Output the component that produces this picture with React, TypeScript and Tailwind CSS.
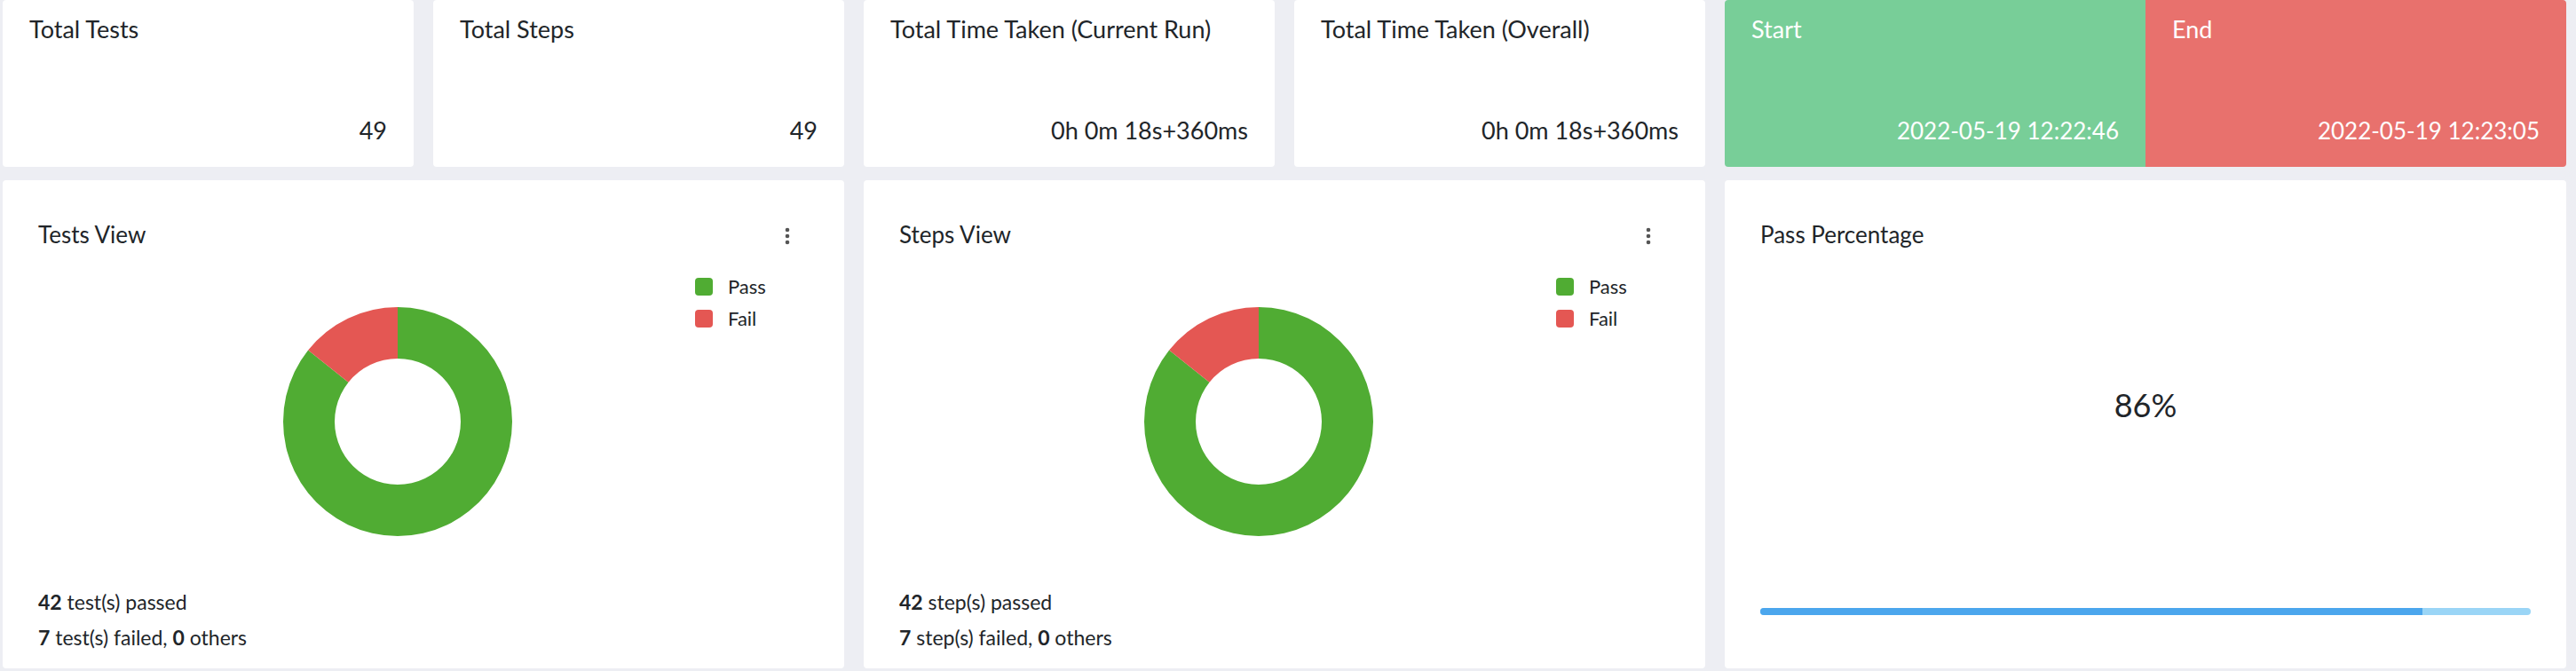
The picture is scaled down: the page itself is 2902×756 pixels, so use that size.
import React from "react";

const PASS = 42;
const FAIL = 7;

const StatCard = ({ title, value }: { title: string; value: string }) => (
	<div className="flex h-[188px] flex-col justify-between rounded-[4px] bg-white px-[30px] pt-[17px] pb-[25px]">
		<p className="text-[27px] leading-[32px]">{title}</p>
		<p className="text-right text-[27px] leading-[32px]">{value}</p>
	</div>
);

const TimeHalf = ({ label, value, className }: { label: string; value: string; className: string }) => (
	<div className={`flex flex-1 flex-col justify-between px-[30px] pt-[17px] pb-[25px] text-white ${className}`}>
		<p className="text-[27px] leading-[32px]">{label}</p>
		<p className="text-right text-[26px] leading-[32px]">{value}</p>
	</div>
);

const Kebab = () => (
	<button className="flex h-[32px] w-[48px] items-center justify-center pt-[4px]">
		<svg width="6" height="20" viewBox="0 0 6 20" fill="#555">
			<circle cx="3" cy="3" r="2.3" />
			<circle cx="3" cy="10" r="2.3" />
			<circle cx="3" cy="17" r="2.3" />
		</svg>
	</button>
);

const Donut = ({ pass, fail }: { pass: number; fail: number }) => {
	const R = 129;
	const r = 71;
	const c = 129;
	const a = ((-90 - (fail / (pass + fail)) * 360) * Math.PI) / 180;
	const ox = c + R * Math.cos(a);
	const oy = c + R * Math.sin(a);
	const ix = c + r * Math.cos(a);
	const iy = c + r * Math.sin(a);
	const green = `M ${c} ${c - R} A ${R} ${R} 0 1 1 ${ox} ${oy} L ${ix} ${iy} A ${r} ${r} 0 1 0 ${c} ${c - r} Z`;
	const red = `M ${c} ${c - R} A ${R} ${R} 0 0 0 ${ox} ${oy} L ${ix} ${iy} A ${r} ${r} 0 0 1 ${c} ${c - r} Z`;
	return (
		<svg width="258" height="258" viewBox="0 0 258 258">
			<path d={green} fill="#50ac33" />
			<path d={red} fill="#e45753" />
		</svg>
	);
};

const LegendItem = ({ label, color }: { label: string; color: string }) => (
	<div className="flex h-[20px] items-center gap-[17px]">
		<span className={`h-[20px] w-[20px] rounded-[4px] ${color}`} />
		<span className="text-[22px] leading-[20px]">{label}</span>
	</div>
);

const ChartCard = ({ title, noun }: { title: string; noun: string }) => (
	<div className="col-span-2 flex h-[550px] flex-col rounded-[4px] bg-white px-[40px] pt-[45px]">
		<div className="flex h-[32px] items-center justify-between">
			<p className="text-[26px] leading-[32px]">{title}</p>
			<Kebab />
		</div>

		<div className="mt-[33px] flex h-[324px]">
			<div className="flex w-[740px] items-center justify-center pl-[70px]">
				<Donut pass={PASS} fail={FAIL} />
			</div>
			<div className="flex flex-col gap-[16px]">
				<LegendItem label="Pass" color="bg-[#50ac33]" />
				<LegendItem label="Fail" color="bg-[#e45753]" />
			</div>
		</div>

		<div className="mt-[21px] text-[23px] leading-[40px]">
			<p>
				<b>{PASS}</b> {noun}(s) passed
			</p>
			<p>
				<b>{FAIL}</b> {noun}(s) failed, <b>0</b> others
			</p>
		</div>
	</div>
);

const PercentCard = () => {
	const pct = Math.round((PASS / (PASS + FAIL)) * 100);
	return (
		<div className="col-span-2 flex h-[550px] flex-col rounded-[4px] bg-white px-[40px] pt-[45px]">
			<div className="flex h-[32px] items-center">
				<p className="text-[26px] leading-[32px]">Pass Percentage</p>
			</div>
			<div className="flex h-[352px] items-center justify-center">
				<p className="text-[36px] leading-none">{pct}%</p>
			</div>
			<div className="mt-[53px] flex h-[8px] overflow-hidden rounded-full bg-[#9ad5f6]">
				<div className="h-full bg-[#4ba6ed]" style={{ width: `${pct}%` }} />
			</div>
		</div>
	);
};

export default function App() {
	return (
		<div className="h-[756px] w-[2902px] overflow-hidden bg-[#edeef3] pl-[3px] pr-[11px] font-['Lato',sans-serif] text-[#212529]">
			<div className="grid grid-cols-6 gap-x-[22px] gap-y-[15px]">
				<StatCard title="Total Tests" value="49" />
				<StatCard title="Total Steps" value="49" />
				<StatCard title="Total Time Taken (Current Run)" value="0h 0m 18s+360ms" />
				<StatCard title="Total Time Taken (Overall)" value="0h 0m 18s+360ms" />
				<div className="col-span-2 flex h-[188px] overflow-hidden rounded-[4px]">
					<TimeHalf label="Start" value="2022-05-19 12:22:46" className="bg-[#78ce98]" />
					<TimeHalf label="End" value="2022-05-19 12:23:05" className="bg-[#e8716d]" />
				</div>

				<ChartCard title="Tests View" noun="test" />
				<ChartCard title="Steps View" noun="step" />
				<PercentCard />
			</div>
		</div>
	);
}
